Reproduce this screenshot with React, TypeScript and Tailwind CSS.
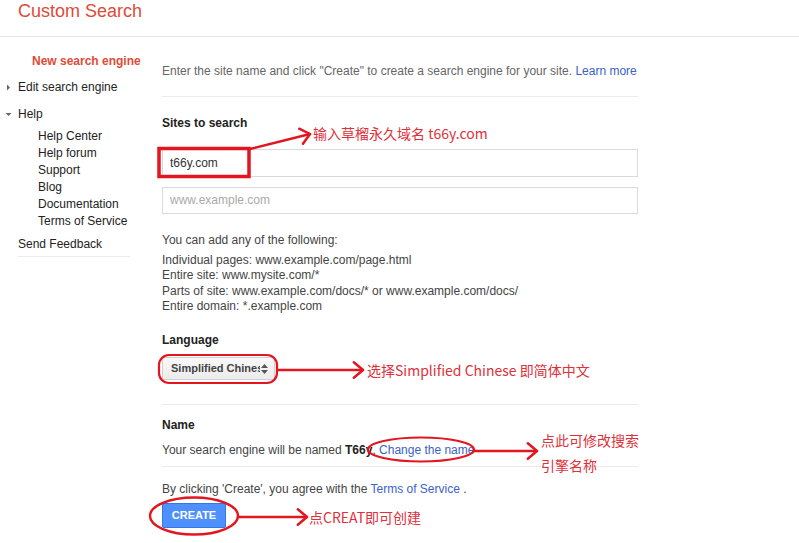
import React from 'react'

const red = '#e3151f'

function Sidebar() {
  return (
    <div className="w-[162px] shrink-0 text-[12px] leading-[15px] text-[#222]">
      <div className="pl-[32px] pt-[17px] font-bold text-[#dd4b39]">New search engine</div>
      <div className="mt-[11px] flex items-center">
        <svg width="18" height="15" viewBox="0 0 18 15" className="shrink-0">
          <path d="M7 4.5 L10 7.5 L7 10.5 Z" fill="#666" />
        </svg>
        <span>Edit search engine</span>
      </div>
      <div className="mt-[12px] flex items-center">
        <svg width="18" height="15" viewBox="0 0 18 15" className="shrink-0">
          <path d="M5.5 6 L11.5 6 L8.5 9 Z" fill="#666" />
        </svg>
        <span>Help</span>
      </div>
      <div className="pl-[38px] mt-[6px] leading-[17px]">
        <div>Help Center</div>
        <div>Help forum</div>
        <div>Support</div>
        <div>Blog</div>
        <div>Documentation</div>
        <div>Terms of Service</div>
      </div>
      <div className="ml-[18px] w-[112px] mt-[7px] pb-[4px] border-b border-[#ebebeb]">Send Feedback</div>
    </div>
  )
}

function Main() {
  return (
    <div className="w-[476px] text-[12px] leading-[15px] text-[#444]">
      <div className="pt-[27px] pb-[17px] border-b border-[#ebebeb] text-[#666]">
        Enter the site name and click "Create" to create a search engine for your site.{' '}
        <span className="text-[#3a62c9]">Learn more</span>
      </div>
      <div className="mt-[19px] font-bold text-[#222]">Sites to search</div>
      <div className="mt-[18px] h-[28px] border border-[#d9d9d9] flex items-center pl-[7px] text-[#333]">t66y.com</div>
      <div className="mt-[10px] h-[27px] border border-[#d9d9d9] flex items-center pl-[7px] text-[#aaa]">www.example.com</div>
      <div className="mt-[19px]">You can add any of the following:</div>
      <div className="mt-[5px] leading-[15.3px]">
        <div>Individual pages: www.example.com/page.html</div>
        <div>Entire site: www.mysite.com/*</div>
        <div>Parts of site: www.example.com/docs/* or www.example.com/docs/</div>
        <div>Entire domain: *.example.com</div>
      </div>
      <div className="mt-[19px] font-bold text-[#222]">Language</div>
      <div className="mt-[9px] w-[113px] h-[23px] rounded-[2px] border border-[#d0d0d0] bg-gradient-to-b from-[#f8f8f8] to-[#ececec] flex items-center pl-[8px] pr-[5px] overflow-hidden">
        <span className="text-[11px] font-bold text-[#444] whitespace-nowrap overflow-hidden w-[89px]">Simplified Chinese</span>
        <svg width="9" height="12" viewBox="0 0 9 12" className="ml-auto shrink-0">
          <path d="M1 5 L4.5 1 L8 5 Z M1 7 L4.5 11 L8 7 Z" fill="#555" />
        </svg>
      </div>
      <div className="mt-[24px] border-t border-[#ebebeb]" />
      <div className="mt-[13px] font-bold text-[#222]">Name</div>
      <div className="mt-[10px] pb-[8px] border-b border-[#ebebeb]">
        Your search engine will be named <b className="text-[#222]">T66y</b>.{' '}
        <span className="text-[#3a62c9]">Change the name</span>
      </div>
      <div className="mt-[15px]">
        By clicking 'Create', you agree with the <span className="text-[#3a62c9]">Terms of Service</span> .
      </div>
      <button className="mt-[6px] w-[64px] h-[25px] rounded-[2px] bg-[#4d90fe] border border-[#3079ed] text-white text-[11px] font-bold">
        CREATE
      </button>
    </div>
  )
}

function Arrow({ x1, y1, x2, y2 }: { x1: number; y1: number; x2: number; y2: number }) {
  const a = Math.atan2(y2 - y1, x2 - x1)
  const l = 12
  const p1 = [x2 - l * Math.cos(a - 0.7), y2 - l * Math.sin(a - 0.7)]
  const p2 = [x2 - l * Math.cos(a + 0.7), y2 - l * Math.sin(a + 0.7)]
  return (
    <g stroke={red} strokeWidth="2.5" fill="none" strokeLinecap="round" strokeLinejoin="round">
      <line x1={x1} y1={y1} x2={x2} y2={y2} />
      <polyline points={`${p1[0]},${p1[1]} ${x2},${y2} ${p2[0]},${p2[1]}`} />
    </g>
  )
}

function Annotations() {
  return (
    <>
      <svg className="absolute inset-0 pointer-events-none" width="799" height="543">
        <rect x="159" y="148.5" width="90" height="28" fill="none" stroke={red} strokeWidth="3.5" />
        <Arrow x1={250} y1={149} x2={310} y2={134} />
        <rect x="159" y="355" width="118" height="28" rx="10" fill="none" stroke={red} strokeWidth="2.2" />
        <Arrow x1={278} y1={370} x2={363} y2={370} />
        <ellipse cx="421" cy="449.5" rx="53" ry="12" fill="none" stroke={red} strokeWidth="2.2" />
        <Arrow x1={474} y1={451} x2={537} y2={451} />
        <ellipse cx="194" cy="516" rx="44" ry="18.5" fill="none" stroke={red} strokeWidth="2.4" />
        <Arrow x1={238} y1={517} x2={307} y2={517} />
      </svg>
      <div className="absolute left-[313px] top-[124px] text-[14px] leading-[18px] text-[#e0303a] whitespace-nowrap font-['Noto_Sans_CJK_SC',sans-serif]">
        输入草榴永久域名 t66y.com
      </div>
      <div className="absolute left-[367px] top-[361px] text-[14px] leading-[18px] text-[#e0303a] whitespace-nowrap font-['Noto_Sans_CJK_SC',sans-serif]">
        选择Simplified Chinese 即简体中文
      </div>
      <div className="absolute left-[541px] top-[428px] text-[14px] leading-[25px] text-[#e0303a] font-['Noto_Sans_CJK_SC',sans-serif]">
        <div>点此可修改搜索</div>
        <div>引擎名称</div>
      </div>
      <div className="absolute left-[309px] top-[508px] text-[14px] leading-[18px] text-[#e0303a] whitespace-nowrap font-['Noto_Sans_CJK_SC',sans-serif]">
        点CREAT即可创建
      </div>
    </>
  )
}

export default function App() {
  return (
    <div className="relative w-[799px] h-[543px] overflow-hidden bg-white font-['Liberation_Sans',Arial,sans-serif]">
      <div className="h-[37px] border-b border-[#e5e5e5] pl-[18px]">
        <div className="text-[18px] leading-[22px] text-[#dd4b39]">Custom Search</div>
      </div>
      <div className="flex">
        <Sidebar />
        <Main />
      </div>
      <Annotations />
    </div>
  )
}
